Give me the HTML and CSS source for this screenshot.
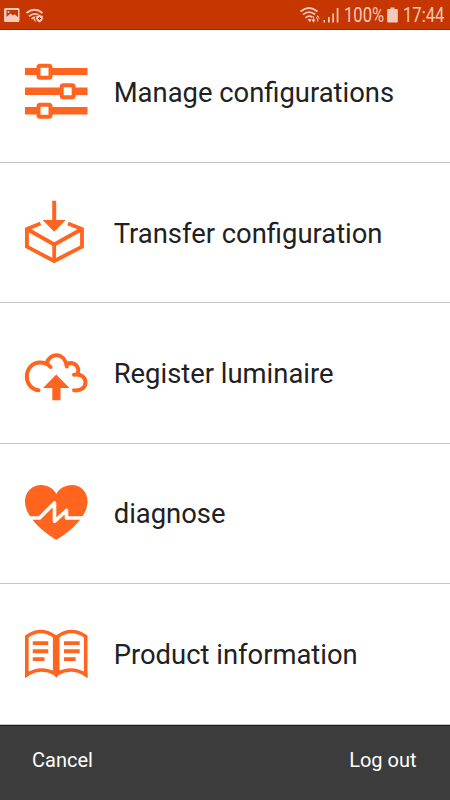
FILE: index.html
```html
<!DOCTYPE html>
<html lang="en">
<head>
<meta charset="utf-8">
<title>Menu</title>
<link rel="stylesheet" href="styles.css">
</head>
<body>
<div class="screen">
  <header class="status">
    <svg class="status-left" viewBox="0 0 48 30">
      <path fill-rule="evenodd" d="M5.5 8h12.500q1.500 0 1.500 1.500v11q0 1.500-1.500 1.500h-12.500q-1.500 0-1.500-1.500v-11q0-1.500 1.500-1.500zM6.500 10v7l4-3.500 2.500 2 1.800-1.200 3.200 3V10z"/>
      <circle cx="8.500" cy="12" r="1"/>
      <g fill="none" stroke="#f3cabd" stroke-width="1.800"><path d="M26.500 13Q34.500 6.500 42.500 13"/><path d="M29 16.200Q34.500 11.800 40 15.500"/><path d="M31.500 18.800Q33.500 17 35.500 17.500"/></g>
      <path d="M33 18.500l2.500 0v4z"/>
      <path stroke="#c63600" stroke-width=".8" d="M39.500 14.500l3.700 1.300v3q0 2.500-3.700 4-3.700-1.500-3.700-4v-3z"/>
      <path fill="none" stroke="#c63600" d="M38 18.500h3M39.500 17v3"/>
    </svg>
    <svg class="status-signal" viewBox="298 0 44 30">
      <g fill="none" stroke="#f3cabd" stroke-width="1.700"><path d="M300.500 11.500Q309 4.500 317.500 11.500"/><path d="M303 14.700Q309 9.500 315.200 14.500"/><path d="M305.500 17.800Q309 14.700 312.500 17.300"/></g>
      <path d="M307.500 19.500q2-1.500 4 0l-1.500 2.800zM311.500 19.500h4l-2 3.200zM315.700 18.500h4l-2-3.500zM313 16.500h1v4h-1zM317.200 17h1v4.500h-1z"/>
      <path d="M323.500 20h1.500v2.500h-1.500zM328 17h1.700v5.500H328zM332.300 13.500h1.700v9h-1.700zM336.700 8h1.700v14.500h-1.700z"/>
    </svg>
    <span class="level"><span>100%</span></span>
    <svg class="battery" viewBox="386 0 14 30"><path d="M390.500 7.500h4V9h2.500q.8 0 .8.800v12q0 .8-.8.800h-9q-.8 0-.8-.8v-12q0-.8.800-.8h2.500z"/></svg>
    <span class="clock"><span>17:44</span></span>
  </header>
  <main class="menu">
    <a class="row first">
      <svg class="icon" viewBox="24 53 64 80">
        <path d="M25 68h62.500v7H25zM25 87.500h62.500v7.500H25zM25 107h62.500v7.500H25z"/>
        <g class="knob"><rect x="38.500" y="65.700" width="12" height="12" rx="1.500"/><rect x="61.700" y="85.200" width="12" height="12" rx="1.500"/><rect x="38.500" y="104.700" width="12" height="12" rx="1.500"/></g>
      </svg>
      <span class="label">Manage configurations</span>
    </a>
    <a class="row">
      <svg class="icon" viewBox="24 193 64 80">
        <path d="M52.200 200.700h4V220h9.600L54.200 231.700 42.600 220h9.600z"/>
        <path class="line box" d="M40.500 223.500L26.900 229V246.700L54.200 261 82 246.700V229L68 223.500M26.900 229L54.200 244.500 82 229M54.200 244.500V261"/>
      </svg>
      <span class="label low">Transfer configuration</span>
    </a>
    <a class="row">
      <svg class="icon" viewBox="24 333 64 80">
        <path d="M56.200 374.500L69.500 388h-9v12.300h-8.200V388H43z"/>
        <path class="line cloud" d="M38.500 390.300C31 389.500 26.800 383 26.800 376.500 26.800 368 33 362.600 40 362.600Q46.500 362.600 50.500 367M46.500 363.500C50 352.500 64.500 351.500 66.800 366.500M66.800 363.700C75 361 80.500 367.500 77.300 374.500M74 374.700C82 373.500 85.500 378 85.500 382.300 85.500 387.300 81.500 391 74 390.300"/>
      </svg>
      <span class="label low">Register luminaire</span>
    </a>
    <a class="row">
      <svg class="icon" viewBox="24 474 64 80">
        <path d="M56.300 539.800C48 535 25 519 25 501.500 25 492 32 485 41 485 48 485 53.500 488.500 56.300 494 59 488.500 65 485 72 485 81 485 87.500 492 87.500 501.500 87.500 519 65 535 56.300 539.800z"/>
        <path class="pulse" d="M24 518H39.500L54.500 503V521.500L66.500 510.500V518H88"/>
      </svg>
      <span class="label">diagnose</span>
    </a>
    <a class="row last">
      <svg class="icon" viewBox="24 614 64 80">
        <path class="line book" d="M26.800 674.500V636.500Q41 626.500 54.700 636.500V673.500Q41 666 26.800 674.500zM57.700 636.500Q71.500 626.500 85.700 636.500V674.500Q71.500 666 57.700 673.500z"/>
        <path d="M54 635h4.500v40L56.300 678 54 675zM25.200 672.500L25.200 678 29 675.500 29 671zM87.300 672.500V678L83.500 675.500V671zM32.800 641.200h15.500v3.900H32.800zM32.800 649.300h15.500v3.900H32.800zM32.800 657.200h11.700v3.900H32.800zM64 641.200h15.700v3.900H64zM64 649.300h15.700v3.900H64zM64 657.200h11.700v3.900H64z"/>
      </svg>
      <span class="label low">Product information</span>
    </a>
  </main>
  <footer class="actions"><span>Cancel</span><span>Log out</span></footer>
</div>
</body>
</html>
```

FILE: styles.css
```css
body {
  margin: 0;
  font-family: Roboto, sans-serif;
}

.screen {
  width: 450px;
  height: 800px;
  display: flex;
  flex-direction: column;
  background: #fff;
  overflow: hidden;
}

.status {
  box-sizing: border-box;
  height: 30px;
  display: flex;
  align-items: center;
  background: #c63600;
  border-bottom: 1px solid #b81c00;
  color: #f3cabd;
  font-size: 19.5px;
  line-height: 30px;
}

.status svg {
  height: 30px;
  fill: #f3cabd;
  flex: none;
}

.status-left { width: 48px; margin-right: auto; }
.status-signal { width: 44px; }
.level { width: 42px; margin-left: 2px; }
.battery { width: 14px; }
.clock { width: 47px; margin-left: 3px; }

.level,
.clock { padding-top: 2px; }

.level span,
.clock span {
  display: inline-block;
  transform: scaleX(0.85);
  transform-origin: left;
}

.menu {
  flex: 1;
  display: grid;
  grid-template-rows: 133px 140px 141px 140px 141px;
}

.row {
  box-sizing: border-box;
  display: flex;
  align-items: center;
  padding-left: 24px;
  border-bottom: 1px solid #c4c4c4;
}

.first { padding-bottom: 7px; }

.icon {
  width: 64px;
  height: 80px;
  fill: #ff651f;
}

.label {
  margin-left: 25.7px;
  color: #212121;
  font-size: 27.4px;
  line-height: 32px;
  white-space: nowrap;
}

.low { padding-top: 2px; }

.knob { fill: #fff; stroke: #ff651f; stroke-width: 4px; }
.line { fill: none; stroke: #ff651f; }
.box { stroke-width: 3.8px; }
.cloud { stroke-width: 4px; stroke-linecap: round; }
.pulse { fill: none; stroke: #fff; stroke-width: 3.6px; stroke-linejoin: round; }
.book { stroke-width: 3.6px; }

.actions {
  box-sizing: border-box;
  height: 75px;
  display: flex;
  align-items: center;
  justify-content: space-between;
  padding: 0 33.5px 7px 32px;
  border-top: 1px solid #1e1e1e;
  background: #3c3c3c;
  color: #fff;
  font-size: 20px;
}
```
